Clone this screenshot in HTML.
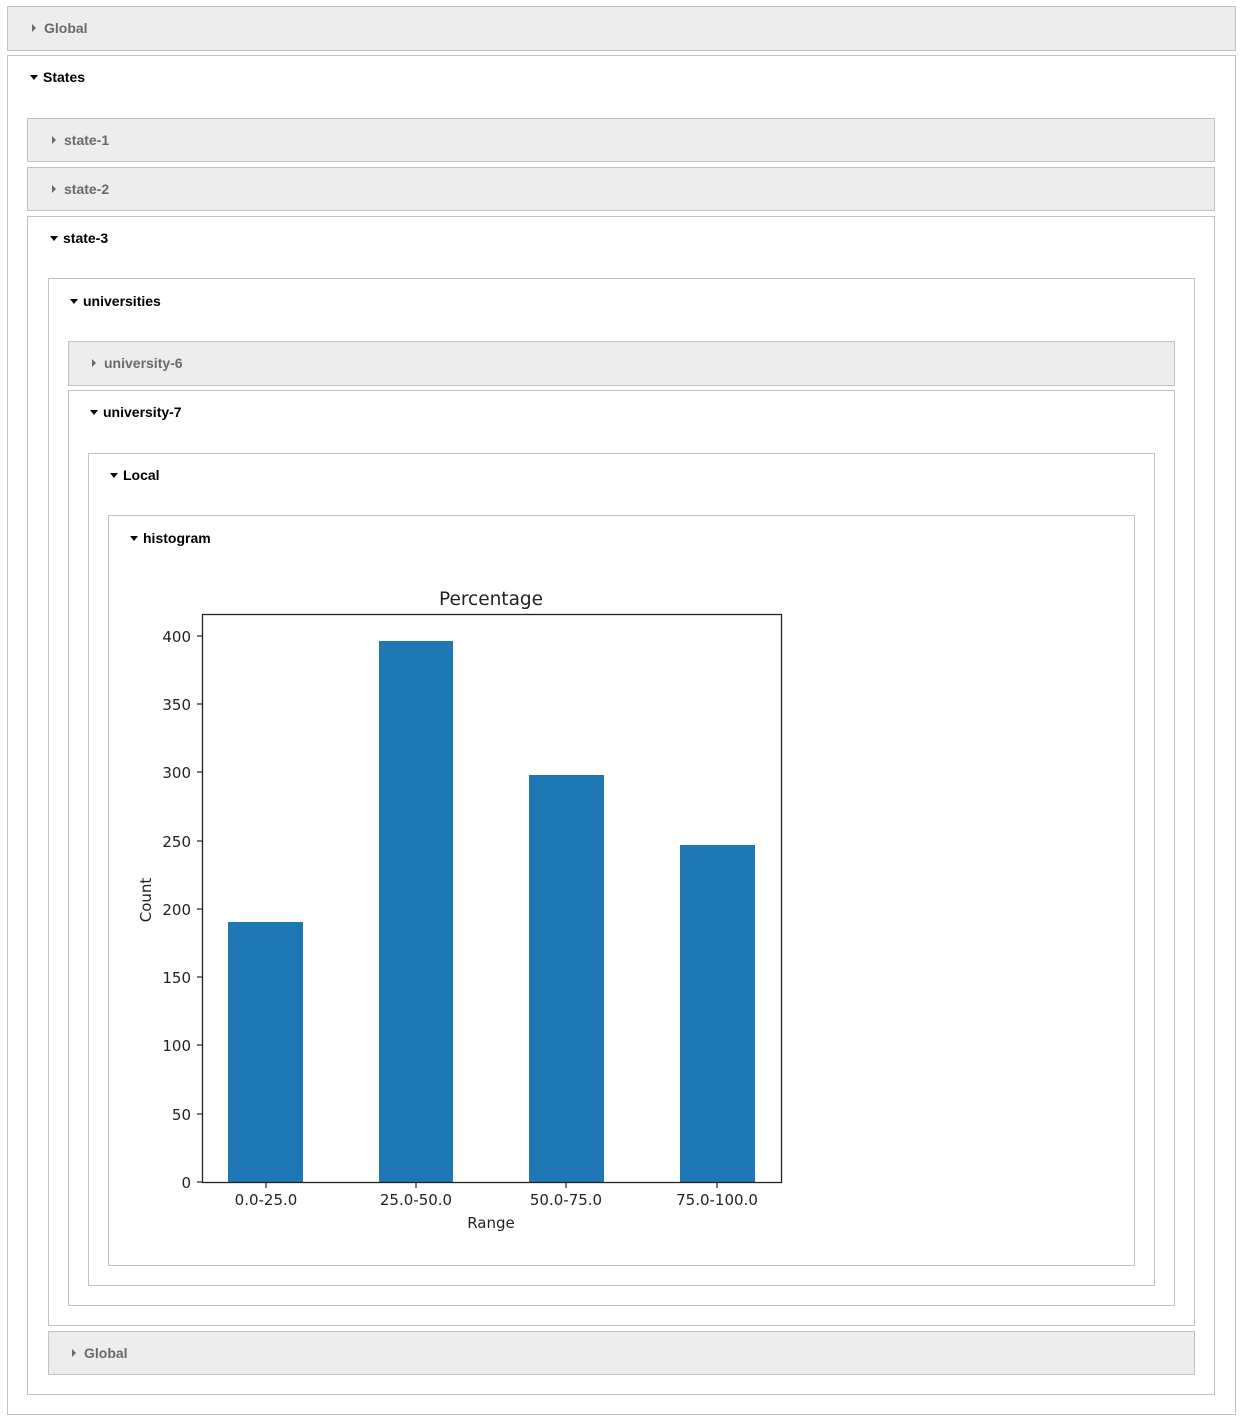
<!DOCTYPE html>
<html><head><meta charset="utf-8"><style>
html,body{margin:0;padding:0;background:#fff;width:1242px;height:1423px;overflow:hidden}
.b{position:absolute;border:1px solid #c2c2c2;box-sizing:border-box;background:#fff}
.g{background:#ededed}
.l{position:absolute;font-family:"Liberation Sans",sans-serif;font-weight:bold;font-size:14px;color:#000;line-height:16px}
.g2{color:#6a6a6a}
.tr{display:inline-block;width:0;height:0;margin-right:5px;vertical-align:2px}
.dn{border-left:4px solid transparent;border-right:4px solid transparent;border-top:5px solid #000}
.rt{border-top:4px solid transparent;border-bottom:4px solid transparent;border-left:4px solid #6a6a6a;vertical-align:1px;margin-right:8px;margin-left:2px}
</style></head><body>
<div class="b g" style="left:7px;top:6px;width:1229px;height:45px"></div>
<div class="l g2" style="left:30px;top:20px"><span class="tr rt"></span>Global</div>
<div class="b" style="left:7px;top:55px;width:1229px;height:1360px"></div>
<div class="l" style="left:30px;top:69px"><span class="tr dn"></span>States</div>
<div class="b g" style="left:27px;top:118px;width:1188px;height:44px"></div>
<div class="l g2" style="left:50px;top:132px"><span class="tr rt"></span>state-1</div>
<div class="b g" style="left:27px;top:167px;width:1188px;height:44px"></div>
<div class="l g2" style="left:50px;top:181px"><span class="tr rt"></span>state-2</div>
<div class="b" style="left:27px;top:216px;width:1188px;height:1179px"></div>
<div class="l" style="left:50px;top:230px"><span class="tr dn"></span>state-3</div>
<div class="b" style="left:48px;top:278px;width:1147px;height:1048px"></div>
<div class="l" style="left:70px;top:293px"><span class="tr dn"></span>universities</div>
<div class="b g" style="left:68px;top:341px;width:1107px;height:45px"></div>
<div class="l g2" style="left:90px;top:355px"><span class="tr rt"></span>university-6</div>
<div class="b" style="left:68px;top:390px;width:1107px;height:916px"></div>
<div class="l" style="left:90px;top:404px"><span class="tr dn"></span>university-7</div>
<div class="b" style="left:88px;top:453px;width:1067px;height:833px"></div>
<div class="l" style="left:110px;top:467px"><span class="tr dn"></span>Local</div>
<div class="b" style="left:108px;top:515px;width:1027px;height:751px"></div>
<div class="l" style="left:130px;top:530px"><span class="tr dn"></span>histogram</div>
<div class="b g" style="left:48px;top:1331px;width:1147px;height:44px"></div>
<div class="l g2" style="left:70px;top:1345px"><span class="tr rt"></span>Global</div>
<svg style="position:absolute;left:0;top:0" width="1242" height="1423" font-family="DejaVu Sans,sans-serif" fill="#222">
<g fill="#1f77b4">
<rect x="228" y="922" width="75" height="260"/>
<rect x="379" y="641" width="74" height="541"/>
<rect x="529" y="775" width="75" height="407"/>
<rect x="680" y="845" width="75" height="337"/>
</g>
<rect x="202.5" y="614.5" width="579" height="568" fill="none" stroke="#222" stroke-width="1.3"/>
<g stroke="#222" stroke-width="1.2">
<line x1="197" x2="202" y1="1182" y2="1182"/><line x1="197" x2="202" y1="1114" y2="1114"/>
<line x1="197" x2="202" y1="1045" y2="1045"/><line x1="197" x2="202" y1="977" y2="977"/>
<line x1="197" x2="202" y1="909" y2="909"/><line x1="197" x2="202" y1="841" y2="841"/>
<line x1="197" x2="202" y1="772" y2="772"/><line x1="197" x2="202" y1="704" y2="704"/>
<line x1="197" x2="202" y1="636" y2="636"/>
<line x1="266" x2="266" y1="1183" y2="1188"/><line x1="416" x2="416" y1="1183" y2="1188"/>
<line x1="566" x2="566" y1="1183" y2="1188"/><line x1="717" x2="717" y1="1183" y2="1188"/>
</g>
<g font-size="15" text-anchor="end">
<text x="191" y="1188">0</text><text x="191" y="1120">50</text><text x="191" y="1051">100</text>
<text x="191" y="983">150</text><text x="191" y="915">200</text><text x="191" y="847">250</text>
<text x="191" y="778">300</text><text x="191" y="710">350</text><text x="191" y="642">400</text>
</g>
<g font-size="15" text-anchor="middle">
<text x="266" y="1205">0.0-25.0</text><text x="416" y="1205">25.0-50.0</text>
<text x="566" y="1205">50.0-75.0</text><text x="717" y="1205">75.0-100.0</text>
<text x="491" y="1228">Range</text>
<text transform="translate(151,900) rotate(-90)">Count</text>
<text x="491" y="605" font-size="18.5">Percentage</text>
</g>
</svg>
</body></html>
